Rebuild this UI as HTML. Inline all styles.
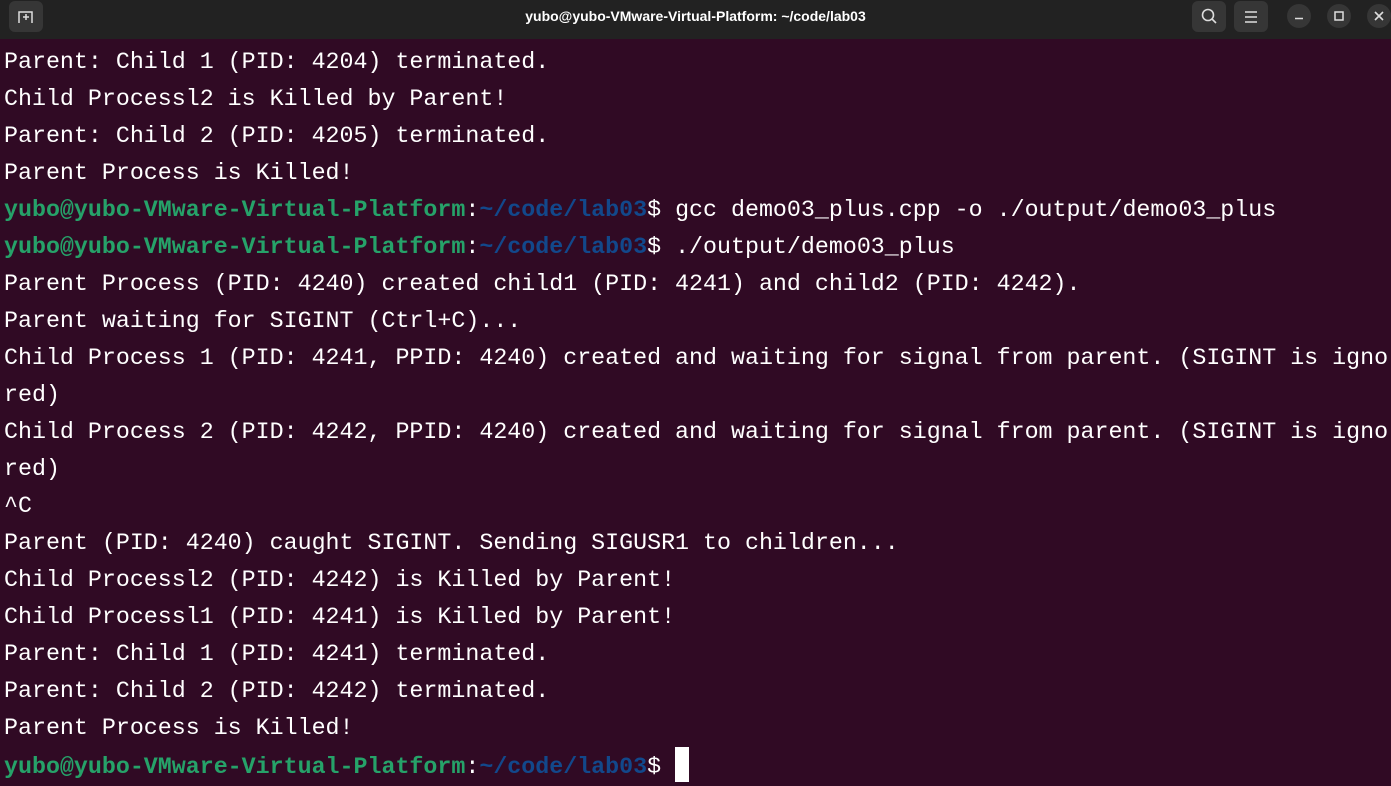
<!DOCTYPE html>
<html><head><meta charset="utf-8"><style>
html,body{margin:0;padding:0;width:1391px;height:782px;overflow:hidden;background:#300a24;}
.bar{position:absolute;left:0;top:0;width:1391px;height:39px;background:#222222;}
.title{position:absolute;left:0;width:1391px;top:8px;text-align:center;color:#fff;font:bold 14px/17px "Liberation Sans",sans-serif;}
.btn{position:absolute;top:1px;width:34px;height:31px;background:#363636;border-radius:6px;}
.cb{position:absolute;top:4px;width:24px;height:24px;background:#363636;border-radius:50%;}
.term{position:absolute;left:4px;top:44px;font-family:"Liberation Mono",monospace;font-size:23.3px;line-height:37px;color:#fff;white-space:pre;}
.g{color:#26a269;font-weight:bold}.b{color:#12488b;font-weight:bold}
.cur{display:inline-block;width:14px;height:35px;background:#fff;vertical-align:-9px;}
</style></head><body>
<div class="bar"></div>
<div class="btn" style="left:9px"><svg width="34" height="31"><path d="M10 22V11h13v11M14 16h6M17 13v6" stroke="#ddd" stroke-width="1.5" fill="none"/></svg></div>
<div class="title">yubo@yubo-VMware-Virtual-Platform: ~/code/lab03</div>
<div class="btn" style="left:1192px"><svg width="34" height="31"><circle cx="16" cy="14" r="5.5" stroke="#ddd" stroke-width="1.6" fill="none"/><path d="M20 18l4 4" stroke="#ddd" stroke-width="1.6"/></svg></div>
<div class="btn" style="left:1234px"><svg width="34" height="31"><path d="M11 11h12M11 16h12M11 21h12" stroke="#ddd" stroke-width="1.4"/></svg></div>
<div class="cb" style="left:1287px"><svg width="24" height="24"><path d="M8 14.5h8" stroke="#ddd" stroke-width="1.5"/></svg></div>
<div class="cb" style="left:1327px"><svg width="24" height="24"><rect x="8" y="8" width="8" height="8" stroke="#ddd" stroke-width="1.5" fill="none"/></svg></div>
<div class="cb" style="left:1367px"><svg width="24" height="24"><path d="M8 8l8 8M16 8l-8 8" stroke="#ddd" stroke-width="1.6"/></svg></div>
<div class="term">Parent: Child 1 (PID: 4204) terminated.
Child Processl2 is Killed by Parent!
Parent: Child 2 (PID: 4205) terminated.
Parent Process is Killed!
<span class="g">yubo@yubo-VMware-Virtual-Platform</span>:<span class="b">~/code/lab03</span>$ gcc demo03_plus.cpp -o ./output/demo03_plus
<span class="g">yubo@yubo-VMware-Virtual-Platform</span>:<span class="b">~/code/lab03</span>$ ./output/demo03_plus
Parent Process (PID: 4240) created child1 (PID: 4241) and child2 (PID: 4242).
Parent waiting for SIGINT (Ctrl+C)...
Child Process 1 (PID: 4241, PPID: 4240) created and waiting for signal from parent. (SIGINT is igno
red)
Child Process 2 (PID: 4242, PPID: 4240) created and waiting for signal from parent. (SIGINT is igno
red)
^C
Parent (PID: 4240) caught SIGINT. Sending SIGUSR1 to children...
Child Processl2 (PID: 4242) is Killed by Parent!
Child Processl1 (PID: 4241) is Killed by Parent!
Parent: Child 1 (PID: 4241) terminated.
Parent: Child 2 (PID: 4242) terminated.
Parent Process is Killed!
<span class="g">yubo@yubo-VMware-Virtual-Platform</span>:<span class="b">~/code/lab03</span>$ <span class="cur"></span></div>
</body></html>
